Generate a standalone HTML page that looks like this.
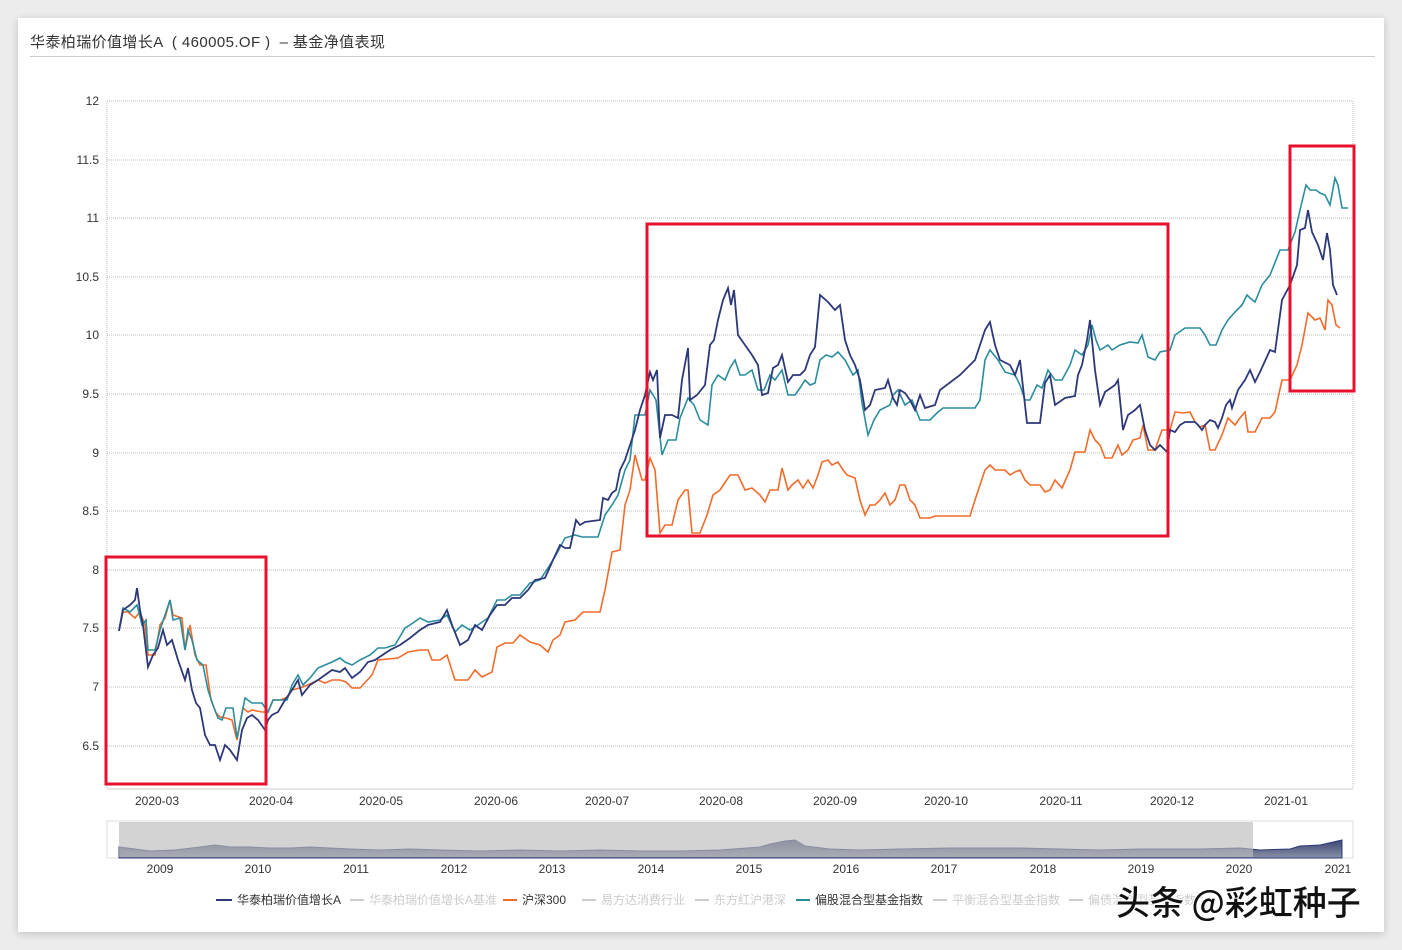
<!DOCTYPE html>
<html><head><meta charset="utf-8"><style>
body{margin:0;width:1402px;height:950px;background:#ececec;font-family:"Liberation Sans","Noto Sans CJK SC",sans-serif;overflow:hidden;position:relative}
.card{position:absolute;left:18px;top:18px;width:1366px;height:914px;background:#fff;box-shadow:0 2px 8px rgba(0,0,0,.18)}
.title{position:absolute;left:30px;top:31px;font-size:15px;color:#333;letter-spacing:0.4px;white-space:pre}
.hr{position:absolute;left:30px;top:56px;width:1345px;height:1px;background:#ccc}
svg{position:absolute;left:0;top:0}
.wm{position:absolute;left:1116px;top:876px;font-size:34px;color:#111;font-family:"Noto Sans CJK SC",sans-serif;font-weight:500;text-shadow:-1px -1px 0 #fff,1px 1px 0 #fff,2px 2px 1px #fff}
</style></head><body>
<div class="card"></div>
<div class="title">华泰柏瑞价值增长A  ( 460005.OF )  – 基金净值表现</div>
<div class="hr"></div>
<svg width="1402" height="950" font-family="Liberation Sans, Noto Sans CJK SC, sans-serif">
<defs><linearGradient id="g" x1="0" y1="0" x2="0" y2="1"><stop offset="0" stop-color="#3a4670"/><stop offset="1" stop-color="#8a90a8"/></linearGradient></defs>
<g stroke="#bbb" stroke-dasharray="1,1" stroke-width="1">
<line x1="107" y1="101" x2="1353" y2="101"/><line x1="107" y1="160" x2="1353" y2="160"/><line x1="107" y1="218" x2="1353" y2="218"/><line x1="107" y1="277" x2="1353" y2="277"/><line x1="107" y1="335" x2="1353" y2="335"/><line x1="107" y1="394" x2="1353" y2="394"/><line x1="107" y1="453" x2="1353" y2="453"/><line x1="107" y1="511" x2="1353" y2="511"/><line x1="107" y1="570" x2="1353" y2="570"/><line x1="107" y1="628" x2="1353" y2="628"/><line x1="107" y1="687" x2="1353" y2="687"/><line x1="107" y1="746" x2="1353" y2="746"/>
<line x1="107" y1="101" x2="107" y2="789"/><line x1="1353" y1="101" x2="1353" y2="789"/>
</g>
<line x1="107" y1="789" x2="1353" y2="789" stroke="#ccc"/>
<g font-size="12" fill="#333" text-anchor="end">
<text x="99" y="105">12</text><text x="99" y="164">11.5</text><text x="99" y="222">11</text><text x="99" y="281">10.5</text><text x="99" y="339">10</text><text x="99" y="398">9.5</text><text x="99" y="457">9</text><text x="99" y="515">8.5</text><text x="99" y="574">8</text><text x="99" y="632">7.5</text><text x="99" y="691">7</text><text x="99" y="750">6.5</text>
</g>
<g font-size="12" fill="#333" text-anchor="middle">
<text x="157" y="805">2020-03</text><text x="271" y="805">2020-04</text><text x="381" y="805">2020-05</text><text x="496" y="805">2020-06</text><text x="607" y="805">2020-07</text><text x="721" y="805">2020-08</text><text x="835" y="805">2020-09</text><text x="946" y="805">2020-10</text><text x="1061" y="805">2020-11</text><text x="1172" y="805">2020-12</text><text x="1286" y="805">2021-01</text>
</g>
<polyline fill="none" stroke="#f26b2a" stroke-width="1.6" points="119,630 123,612 128,612 135,618 140,612 145,625 148,655 155,655 160,625 165,618 170,600 173,615 182,618 185,650 190,625 195,655 200,665 206,665 211,700 216,713 220,717 226,718 232,720 237,740 243,708 248,712 252,710 262,712 268,712 273,700 280,700 288,697 292,690 300,688 310,684 318,680 325,683 332,680 340,680 346,682 352,688 360,688 372,675 378,660 398,658 408,652 420,650 428,650 432,660 440,660 447,655 455,680 468,680 475,670 482,677 492,672 497,647 505,643 513,643 520,635 530,642 540,645 548,652 553,640 560,635 565,622 575,620 583,612 600,612 605,590 612,552 620,550 625,505 630,490 635,455 642,480 645,480 650,458 655,470 660,533 665,525 672,525 678,500 685,490 688,490 692,533 700,533 707,515 713,495 720,490 730,475 738,475 745,490 752,488 760,495 765,502 770,490 778,490 782,468 788,490 792,485 798,480 803,488 808,480 813,488 818,475 822,462 828,460 832,465 838,462 843,470 847,475 855,478 860,500 865,515 870,505 875,505 880,500 885,493 890,505 895,500 900,485 905,485 910,500 915,505 920,518 930,518 935,516 945,516 970,516 975,500 985,470 990,465 995,470 1005,470 1010,475 1015,472 1020,470 1025,480 1030,485 1040,485 1045,492 1050,490 1055,480 1062,488 1070,470 1075,452 1085,452 1090,430 1095,440 1100,445 1105,458 1112,458 1118,445 1122,455 1128,450 1133,440 1140,438 1143,425 1148,450 1155,450 1162,430 1170,430 1175,412 1183,413 1190,412 1195,422 1200,427 1205,425 1210,450 1215,450 1222,435 1228,418 1235,425 1240,418 1245,412 1248,432 1255,432 1262,418 1270,418 1275,412 1282,380 1290,380 1297,365 1302,345 1308,313 1315,320 1320,318 1325,330 1328,300 1332,305 1336,325 1340,328"/>
<polyline fill="none" stroke="#2a8d9e" stroke-width="1.6" points="119,630 123,608 130,612 137,605 142,625 146,620 148,650 155,650 160,630 165,615 170,600 173,620 180,618 185,650 188,630 192,640 197,660 203,665 208,690 213,705 218,718 222,720 226,708 233,708 237,738 241,718 245,698 252,703 262,703 268,712 273,700 280,700 287,700 292,685 298,675 303,685 310,678 318,668 325,665 332,662 340,658 345,662 352,665 360,660 370,655 378,648 385,648 395,645 405,628 410,625 420,618 428,622 440,620 447,615 455,632 462,625 470,630 478,625 488,618 497,600 505,600 512,595 520,595 530,583 540,580 548,568 556,555 565,538 575,535 582,537 598,537 605,515 612,505 618,495 625,470 630,460 635,415 645,415 650,390 656,400 662,455 668,440 676,440 680,418 688,398 694,405 700,420 708,425 712,385 718,375 725,380 730,368 735,360 740,375 745,375 752,370 758,390 764,390 770,375 775,380 782,370 788,395 795,395 800,388 805,380 810,385 815,383 820,360 826,355 832,357 838,352 845,360 853,375 858,370 862,403 868,435 874,420 880,410 890,405 893,395 898,390 905,405 912,400 920,420 930,420 938,412 943,408 970,408 975,408 980,400 985,360 990,350 998,360 1005,372 1015,375 1020,385 1025,400 1030,400 1037,385 1042,388 1048,370 1055,380 1062,380 1070,365 1075,350 1082,355 1088,345 1092,325 1096,340 1100,350 1108,345 1112,350 1120,345 1130,342 1138,343 1142,335 1148,357 1155,360 1160,352 1170,350 1175,335 1185,328 1200,328 1205,335 1210,345 1216,345 1222,330 1228,320 1235,312 1242,305 1247,295 1250,298 1255,302 1262,285 1270,275 1280,250 1288,250 1295,232 1300,210 1306,185 1310,190 1316,190 1320,193 1325,195 1330,205 1335,178 1338,185 1342,208 1348,208"/>
<polyline fill="none" stroke="#2d3878" stroke-width="1.8" points="119,631 123,610 130,605 135,600 137,588 140,610 143,625 148,667 153,655 158,648 163,630 167,645 172,640 178,660 185,680 188,668 192,690 196,703 200,708 205,735 210,745 215,745 220,760 225,745 230,750 237,760 242,730 247,718 252,715 258,720 265,730 268,720 272,715 278,712 285,700 292,690 298,680 302,695 310,685 318,680 325,675 332,670 340,672 345,668 352,678 360,672 368,662 375,660 390,650 400,645 410,638 420,630 428,625 440,622 447,610 452,625 460,645 468,640 475,625 482,630 490,615 497,605 505,605 512,598 520,598 528,590 535,580 545,578 553,560 560,545 565,548 570,548 576,520 580,525 585,522 600,520 603,498 608,500 612,493 616,490 620,470 625,460 630,445 635,430 640,410 645,395 650,372 653,380 657,370 660,438 665,415 672,415 678,418 682,380 688,348 690,400 697,395 705,385 710,345 714,340 718,320 723,300 728,288 731,305 734,290 738,335 745,345 752,355 758,365 762,395 768,393 773,368 778,365 782,355 788,382 793,375 800,375 805,370 810,355 815,347 820,295 828,302 835,310 840,305 845,340 850,355 855,365 860,380 865,410 870,405 875,390 885,388 888,380 893,398 897,405 900,390 905,393 910,400 915,410 920,395 925,408 935,405 940,390 960,375 975,360 985,330 990,322 995,345 1000,360 1010,365 1015,375 1020,360 1027,423 1040,423 1045,383 1050,375 1055,405 1065,398 1075,396 1078,375 1082,365 1087,340 1090,320 1095,370 1100,405 1105,392 1115,385 1118,380 1123,430 1128,415 1135,410 1140,405 1145,430 1150,445 1155,450 1160,445 1167,452 1170,430 1175,432 1180,425 1185,422 1195,422 1198,425 1202,430 1205,425 1210,420 1215,422 1218,428 1222,418 1226,405 1230,400 1232,408 1238,390 1245,380 1250,370 1255,382 1260,372 1270,350 1275,352 1282,300 1290,285 1297,265 1300,230 1305,228 1308,210 1312,232 1318,245 1323,260 1327,233 1330,250 1333,285 1337,295"/>
<g fill="none" stroke="#e8112d" stroke-width="3">
<rect x="106" y="557" width="160" height="227"/>
<rect x="647" y="224" width="521" height="312"/>
<rect x="1290" y="146" width="64" height="245"/>
</g>
<rect x="107" y="821" width="1246" height="37" fill="#fff" stroke="#ddd"/>
<path d="M119,847 L135,849 L150,851 L175,850 L200,847 L215,845 L230,847 L250,847 L270,848 L290,848 L310,847 L330,848 L350,849 L380,850 L410,849 L440,850 L480,851 L520,850 L560,851 L600,850 L640,851 L680,851 L720,850 L760,847 L770,844 L785,841 L795,840 L805,846 L830,849 L860,850 L900,849 L950,848 L1000,848 L1020,848 L1060,849 L1100,850 L1140,849 L1170,849 L1200,849 L1240,848 L1260,850 L1290,849 L1300,846 L1320,845 L1342,840 L1342,858 L119,858 Z" fill="url(#g)" stroke="#2d3878" stroke-width="1"/>
<rect x="119" y="822" width="1134" height="35" fill="#bbb" opacity="0.65"/>
<g font-size="12" fill="#333" text-anchor="middle">
<text x="160" y="873">2009</text><text x="258" y="873">2010</text><text x="356" y="873">2011</text><text x="454" y="873">2012</text><text x="552" y="873">2013</text><text x="651" y="873">2014</text><text x="749" y="873">2015</text><text x="846" y="873">2016</text><text x="944" y="873">2017</text><text x="1043" y="873">2018</text><text x="1141" y="873">2019</text><text x="1239" y="873">2020</text><text x="1338" y="873">2021</text>
</g>
<g font-size="12">
<line x1="216" y1="900" x2="232" y2="900" stroke="#2d3878" stroke-width="2"/><text x="237" y="904" fill="#333">华泰柏瑞价值增长A</text>
<line x1="350" y1="900" x2="364" y2="900" stroke="#ccc" stroke-width="2"/><text x="369" y="904" fill="#ccc">华泰柏瑞价值增长A基准</text>
<line x1="503" y1="900" x2="517" y2="900" stroke="#f26b2a" stroke-width="2"/><text x="522" y="904" fill="#333">沪深300</text>
<line x1="582" y1="900" x2="596" y2="900" stroke="#ccc" stroke-width="2"/><text x="601" y="904" fill="#ccc">易方达消费行业</text>
<line x1="695" y1="900" x2="709" y2="900" stroke="#ccc" stroke-width="2"/><text x="714" y="904" fill="#ccc">东方红沪港深</text>
<line x1="796" y1="900" x2="810" y2="900" stroke="#2a8d9e" stroke-width="2"/><text x="815" y="904" fill="#333">偏股混合型基金指数</text>
<line x1="933" y1="900" x2="947" y2="900" stroke="#ccc" stroke-width="2"/><text x="952" y="904" fill="#ccc">平衡混合型基金指数</text>
<line x1="1069" y1="900" x2="1083" y2="900" stroke="#ccc" stroke-width="2"/><text x="1088" y="904" fill="#ccc">偏债混合型基金指数</text>
</g>
</svg>
<div class="wm">头条 @彩虹种子</div>
</body></html>
